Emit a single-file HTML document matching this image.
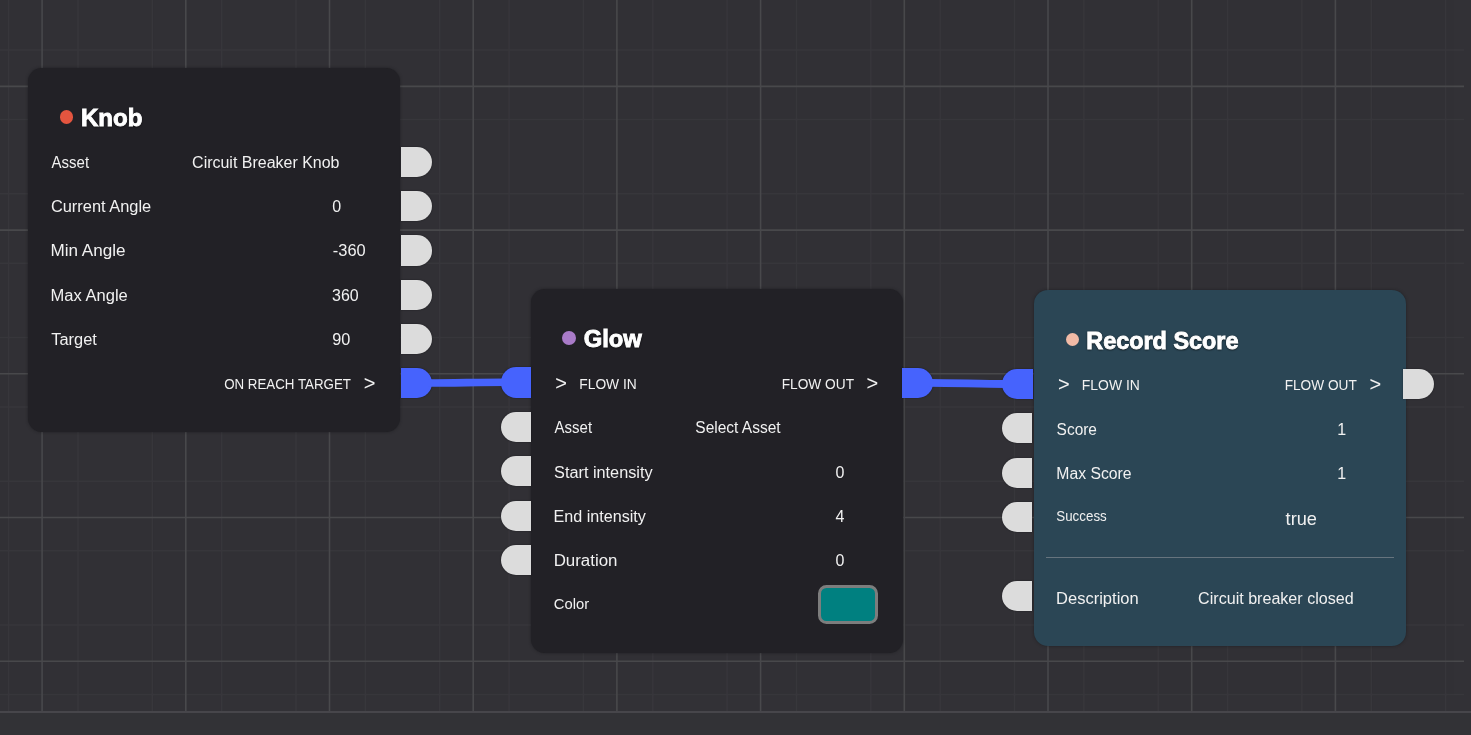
<!DOCTYPE html>
<html lang="en"><head><meta charset="utf-8"><title>Node Graph</title>
<style>
html,body{margin:0;padding:0}
body{width:1471px;height:735px;overflow:hidden;background:#313035;position:relative;
 font-family:"Liberation Sans",sans-serif;color:#f1f1f1}
.grid,.wires{position:absolute;left:0;top:0}
.card{position:absolute;will-change:transform;border-radius:14px;box-shadow:0 0 3px rgba(20,20,24,.55)}
.t{position:absolute;white-space:nowrap;color:#f1f1f1;transform-origin:0 50%}
.ttl{font-weight:700;color:#fff;-webkit-text-stroke:0.9px #fff;text-shadow:0 1px 2px rgba(0,0,0,.75),0 0 2px rgba(0,0,0,.6)}
.dot{position:absolute;width:13.8px;height:13.8px;border-radius:50%}
.c{position:absolute;width:31px;height:30.2px;display:block;box-shadow:0 0 1.5px rgba(12,12,16,.7)}
.c.r{border-radius:0 15.1px 15.1px 0}
.c.l{border-radius:15.1px 0 0 15.1px;width:30.3px}
.sw{position:absolute;box-sizing:border-box;width:60px;height:39.4px;border:3.4px solid #7d7d7d;border-radius:8.5px;background:#008080}
.div{position:absolute;margin:0;border:0;height:1.2px;background:#66747e}
.vbar{position:absolute;left:1454px;top:0;width:17px;height:712px;background:rgba(255,255,255,.008)}
.hbar{position:absolute;left:0;top:695px;width:1454px;height:17px;background:rgba(255,255,255,.008)}
.footer{position:absolute;left:0;top:711px;width:1471px;height:24px;background:#323236;border-top:2px solid #47464b;box-sizing:border-box}
</style></head>
<body>
<svg class="grid" width="1464" height="712" viewBox="0 0 1464 712"><path d="M8.60 0V712M78.00 0V712M152.30 0V712M221.70 0V712M296.00 0V712M365.40 0V712M439.70 0V712M509.10 0V712M583.40 0V712M652.80 0V712M727.10 0V712M796.50 0V712M870.80 0V712M940.20 0V712M1014.50 0V712M1083.90 0V712M1158.20 0V712M1227.60 0V712M1301.90 0V712M1371.30 0V712M1445.60 0V712M0 50.10H1464M0 193.80H1464M0 119.60H1464M0 337.50H1464M0 263.30H1464M0 481.20H1464M0 407.00H1464M0 624.90H1464M0 550.70H1464M0 694.40H1464" stroke="#37363b" stroke-width="1.5" fill="none"/><path d="M42.10 0V712M185.80 0V712M329.50 0V712M473.20 0V712M616.90 0V712M760.60 0V712M904.30 0V712M1048.00 0V712M1191.70 0V712M1335.40 0V712M0 86.40H1464M0 230.10H1464M0 373.80H1464M0 517.50H1464M0 661.20H1464" stroke="#48484b" stroke-width="1.6" fill="none"/></svg>
<div class="card" id="knob" style="left:28.0px;top:67.6px;width:372.3px;height:364.0px;background:#222126">
<b class="dot" style="left:31.5px;top:42.0px;background:#e4553f"></b>
<span id="t1" class="t ttl" style="left:53px;top:34.88px;font-size:24px;line-height:30px;transform:translateX(0.00px) scaleX(1.0020);">Knob</span>
<span id="t2" class="t" style="left:23px;top:84.66px;font-size:16px;line-height:20px;transform:translateX(0.62px) scaleX(0.9352);">Asset</span>
<span id="t3" class="t" style="left:164px;top:84.66px;font-size:16px;line-height:20px;transform:translateX(0.10px) scaleX(0.9981);">Circuit Breaker Knob</span>
<span id="t4" class="t" style="left:22px;top:128.76px;font-size:16px;line-height:20px;transform:translateX(0.90px) scaleX(1.0250);">Current Angle</span>
<span id="t5" class="t" style="left:304.13px;top:128.76px;font-size:16px;line-height:20px;">0</span>
<span id="t6" class="t" style="left:22px;top:173.26px;font-size:16px;line-height:20px;transform:translateX(0.46px) scaleX(1.0680);">Min Angle</span>
<span id="t7" class="t" style="left:304px;top:173.26px;font-size:16px;line-height:20px;transform:translateX(0.79px) scaleX(1.0262);">-360</span>
<span id="t8" class="t" style="left:22px;top:217.86px;font-size:16px;line-height:20px;transform:translateX(0.58px) scaleX(1.0328);">Max Angle</span>
<span id="t9" class="t" style="left:304px;top:217.86px;font-size:16px;line-height:20px;transform:translateX(0.05px) scaleX(0.9982);">360</span>
<span id="t10" class="t" style="left:23px;top:262.26px;font-size:16px;line-height:20px;transform:translateX(0.26px) scaleX(1.0246);">Target</span>
<span id="t11" class="t" style="left:304px;top:262.26px;font-size:16px;line-height:20px;transform:translateX(0.15px) scaleX(1.0169);">90</span>
<span id="t12" class="t" style="left:196px;top:305.63px;font-size:15.5px;line-height:19px;transform:translateX(0.18px) scaleX(0.8592);">ON REACH TARGET</span>
<span id="t13" class="t" style="left:335.74px;top:303.07px;font-size:20px;line-height:25px;">&gt;</span>
</div>
<div class="card" id="glow" style="left:531.0px;top:288.8px;width:371.8px;height:364.4px;background:#222126">
<b class="dot" style="left:31.2px;top:42.3px;background:#a97bc8"></b>
<span id="t14" class="t ttl" style="left:52px;top:35.28px;font-size:24px;line-height:30px;transform:translateX(0.73px) scaleX(0.9910);">Glow</span>
<span id="t15" class="t" style="left:24.37px;top:81.57px;font-size:20px;line-height:25px;">&gt;</span>
<span id="t16" class="t" style="left:48px;top:85.13px;font-size:15.5px;line-height:19px;transform:translateX(0.30px) scaleX(0.8894);">FLOW IN</span>
<span id="t17" class="t" style="left:250px;top:85.13px;font-size:15.5px;line-height:19px;transform:translateX(0.68px) scaleX(0.8841);">FLOW OUT</span>
<span id="t18" class="t" style="left:335.42px;top:81.57px;font-size:20px;line-height:25px;">&gt;</span>
<span id="t19" class="t" style="left:23px;top:128.86px;font-size:16px;line-height:20px;transform:translateX(0.62px) scaleX(0.9352);">Asset</span>
<span id="t20" class="t" style="left:164px;top:128.86px;font-size:16px;line-height:20px;transform:translateX(0.31px) scaleX(0.9688);">Select Asset</span>
<span id="t21" class="t" style="left:23px;top:174.16px;font-size:16px;line-height:20px;transform:translateX(0.08px) scaleX(1.0165);">Start intensity</span>
<span id="t22" class="t" style="left:304.51px;top:174.16px;font-size:16px;line-height:20px;">0</span>
<span id="t23" class="t" style="left:22px;top:217.56px;font-size:16px;line-height:20px;transform:translateX(0.50px) scaleX(1.0081);">End intensity</span>
<span id="t24" class="t" style="left:304.51px;top:217.56px;font-size:16px;line-height:20px;">4</span>
<span id="t25" class="t" style="left:22px;top:261.86px;font-size:16px;line-height:20px;transform:translateX(0.64px) scaleX(1.0552);">Duration</span>
<span id="t26" class="t" style="left:304.51px;top:261.86px;font-size:16px;line-height:20px;">0</span>
<span id="t27" class="t" style="left:22px;top:304.50px;font-size:15px;line-height:19px;transform:translateX(0.83px) scaleX(0.9854);">Color</span>
<span class="sw" style="left:287.0px;top:296.0px"></span>
</div>
<div class="card" id="record" style="left:1033.6px;top:290.2px;width:372.3px;height:355.5px;background:#2b4655">
<b class="dot" style="left:31.6px;top:42.6px;background:#f2bba6"></b>
<span id="t28" class="t ttl" style="left:52px;top:35.88px;font-size:24px;line-height:30px;transform:translateX(0.26px) scaleX(0.9752);">Record Score</span>
<span id="t29" class="t" style="left:23.96px;top:82.17px;font-size:20px;line-height:25px;">&gt;</span>
<span id="t30" class="t" style="left:47px;top:84.73px;font-size:15.5px;line-height:19px;transform:translateX(0.85px) scaleX(0.8970);">FLOW IN</span>
<span id="t31" class="t" style="left:250px;top:84.73px;font-size:15.5px;line-height:19px;transform:translateX(0.64px) scaleX(0.8813);">FLOW OUT</span>
<span id="t32" class="t" style="left:335.38px;top:82.17px;font-size:20px;line-height:25px;">&gt;</span>
<span id="t33" class="t" style="left:22px;top:130.16px;font-size:16px;line-height:20px;transform:translateX(0.61px) scaleX(0.9650);">Score</span>
<span id="t34" class="t" style="left:303.35px;top:130.16px;font-size:16px;line-height:20px;">1</span>
<span id="t35" class="t" style="left:22px;top:173.56px;font-size:16px;line-height:20px;transform:translateX(0.30px) scaleX(0.9848);">Max Score</span>
<span id="t36" class="t" style="left:303.35px;top:173.56px;font-size:16px;line-height:20px;">1</span>
<span id="t37" class="t" style="left:22px;top:215.90px;font-size:15px;line-height:19px;transform:translateX(0.28px) scaleX(0.8901);">Success</span>
<span id="t38" class="t" style="left:251px;top:217.12px;font-size:19px;line-height:24px;transform:translateX(0.60px) scaleX(0.9568);">true</span>
<hr class="div" style="left:12.3px;top:266.9px;width:347.3px">
<span id="t39" class="t" style="left:22px;top:298.76px;font-size:16px;line-height:20px;transform:translateX(0.10px) scaleX(1.0317);">Description</span>
<span id="t40" class="t" style="left:164px;top:298.76px;font-size:16px;line-height:20px;transform:translateX(0.12px) scaleX(1.0049);">Circuit breaker closed</span>
</div>
<i class="c r" style="left:401.1px;top:147.1px;background:#dcdcdc"></i>
<i class="c r" style="left:401.1px;top:191.3px;background:#dcdcdc"></i>
<i class="c r" style="left:401.1px;top:235.4px;background:#dcdcdc"></i>
<i class="c r" style="left:401.1px;top:279.5px;background:#dcdcdc"></i>
<i class="c r" style="left:401.1px;top:323.9px;background:#dcdcdc"></i>
<i class="c r" style="left:401.1px;top:367.9px;background:#4663fd"></i>
<i class="c l" style="left:501.2px;top:367.4px;background:#4663fd"></i>
<i class="c l" style="left:501.1px;top:411.9px;background:#dcdcdc"></i>
<i class="c l" style="left:501.1px;top:456.2px;background:#dcdcdc"></i>
<i class="c l" style="left:501.1px;top:500.5px;background:#dcdcdc"></i>
<i class="c l" style="left:501.1px;top:544.7px;background:#dcdcdc"></i>
<i class="c r" style="left:902.4px;top:367.6px;background:#4663fd"></i>
<i class="c l" style="left:1002.3px;top:368.9px;background:#4663fd"></i>
<i class="c l" style="left:1002.0px;top:413.3px;background:#dcdcdc"></i>
<i class="c l" style="left:1002.0px;top:457.6px;background:#dcdcdc"></i>
<i class="c l" style="left:1002.0px;top:501.9px;background:#dcdcdc"></i>
<i class="c l" style="left:1002.0px;top:581.2px;background:#dcdcdc"></i>
<i class="c r" style="left:1403.1px;top:368.8px;background:#dcdcdc"></i>
<svg class="wires" width="1471" height="735" viewBox="0 0 1471 735"><path d="M428 383.0 C 455 383.0, 478 382.2, 505 382.2" stroke="#4663fd" stroke-width="7.6" fill="none"/><path d="M929 382.8 C 955 382.8, 980 384, 1006 384" stroke="#4663fd" stroke-width="7.8" fill="none"/></svg>
<div class="vbar"></div><div class="hbar"></div>
<div class="footer"></div>
</body></html>
